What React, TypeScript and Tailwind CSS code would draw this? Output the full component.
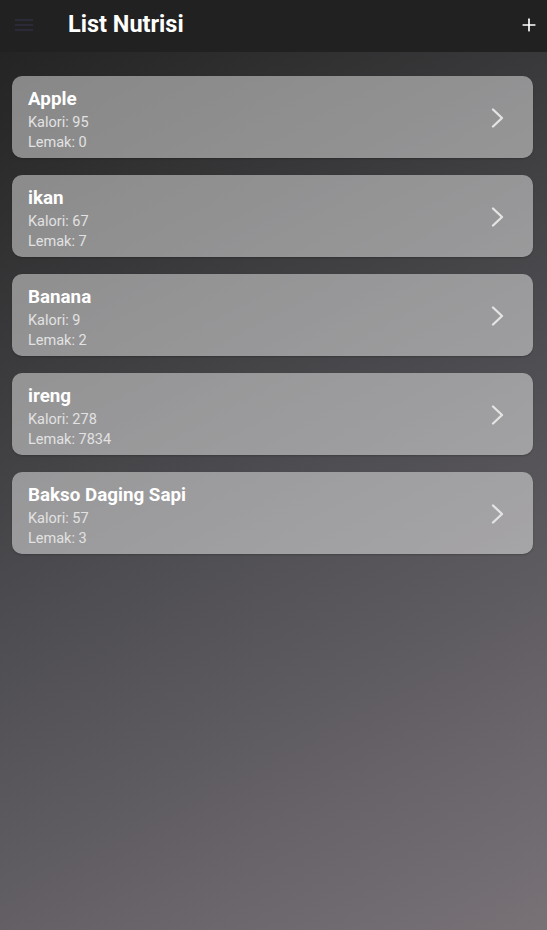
import { Plus } from "lucide-react"

const items = [
  { name: "Apple", kalori: 95, lemak: 0 },
  { name: "ikan", kalori: 67, lemak: 7 },
  { name: "Banana", kalori: 9, lemak: 2 },
  { name: "ireng", kalori: 278, lemak: 7834 },
  { name: "Bakso Daging Sapi", kalori: 57, lemak: 3 },
]

const App: React.FC = () => (
  <div className="flex flex-col w-full h-[930px] font-['Roboto',sans-serif]">
    <header className="flex items-center h-[52px] bg-[#212121] shrink-0">
      <div className="flex flex-col justify-center gap-[3px] w-[18px] ml-[15px] -mt-[2px]">
        <span className="block h-[2px] bg-[#2a2a38]"></span>
        <span className="block h-[2px] bg-[#2a2a38]"></span>
        <span className="block h-[2px] bg-[#2a2a38]"></span>
      </div>
      <h1 className="ml-[35px] -mt-[3px] text-[23.5px] font-bold text-white">List Nutrisi</h1>
      <div className="ml-auto mr-[8px] -mt-[2px] text-white">
        <Plus size={20} strokeWidth={2} />
      </div>
    </header>
    <main className="flex-1 bg-[linear-gradient(152deg,#242424,#4e4d51_50%,#787277)] pl-3 pr-[14px] pt-6">
      <div className="flex flex-col gap-[17px]">
        {items.map((item) => (
          <div
            key={item.name}
            className="flex items-center h-[82px] rounded-[10px] bg-white/45 pl-4 pr-[28px] shadow-[0_1px_2px_rgba(0,0,0,0.2)]"
          >
            <div className="flex flex-col self-start pt-[12px]">
              <span className="text-[18.8px] leading-[22px] font-bold text-white">{item.name}</span>
              <span className="text-[14.5px] leading-[20px] text-[#e2e2e2] mt-[3px]">Kalori: {item.kalori}</span>
              <span className="text-[14.5px] leading-[20px] text-[#e2e2e2]">Lemak: {item.lemak}</span>
            </div>
            <svg className="ml-auto mt-[2px]" width="14" height="20" viewBox="0 0 14 20" fill="none">
              <polyline
                points="2,1.5 11,10 2,18.5"
                stroke="#e4e4e4"
                strokeWidth="2.3"
                strokeLinecap="round"
                strokeLinejoin="round"
              />
            </svg>
          </div>
        ))}
      </div>
    </main>
  </div>
)

export default App
